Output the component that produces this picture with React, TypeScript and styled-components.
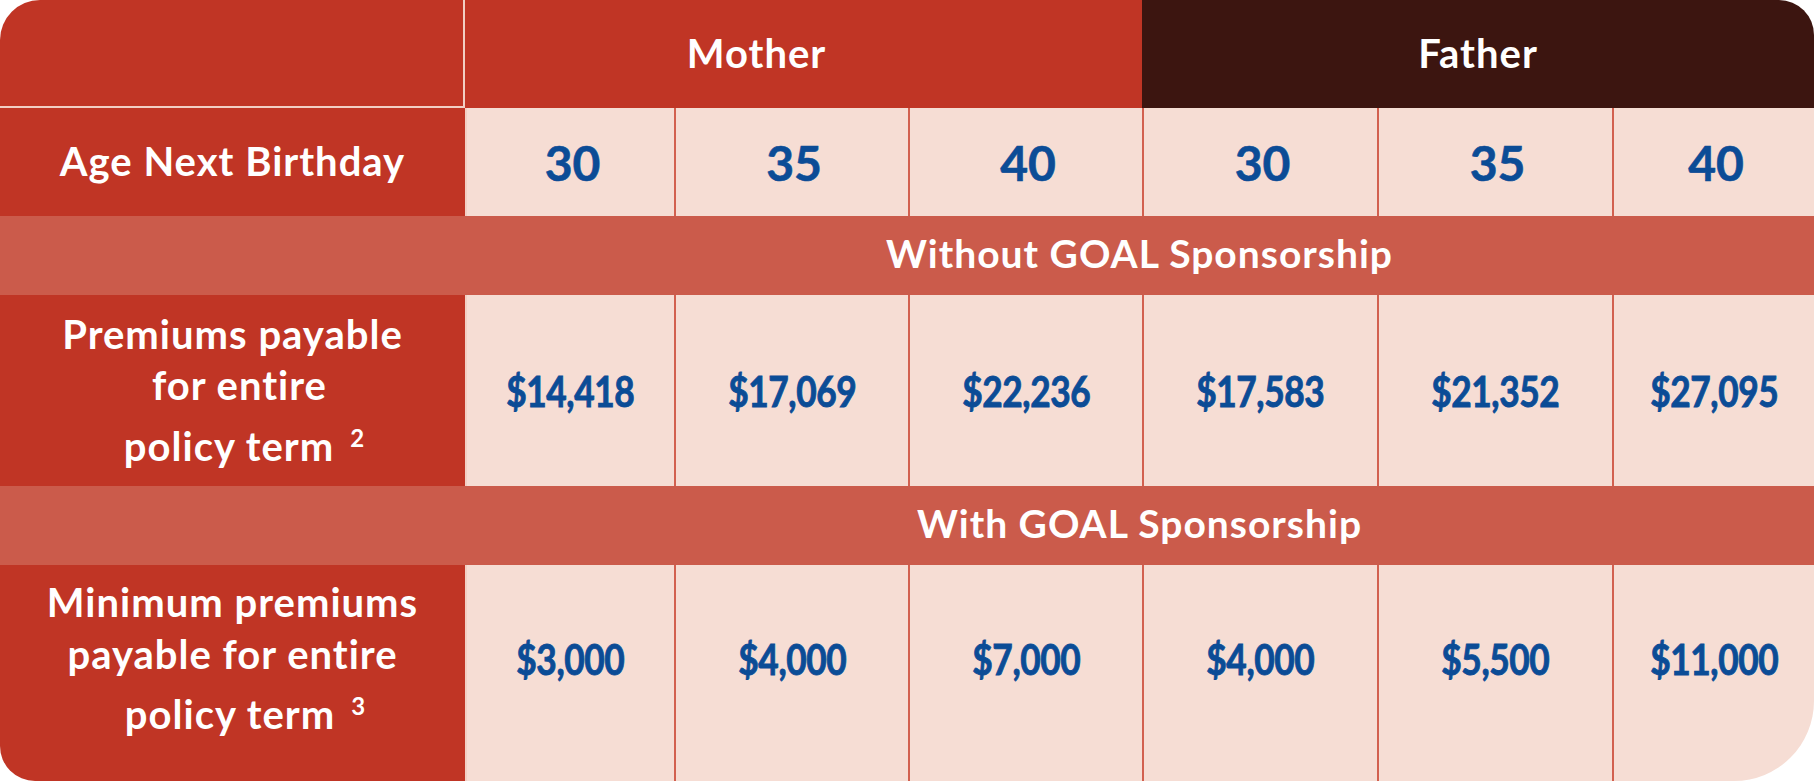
import React, { FC } from 'react';
import styled, { createGlobalStyle } from 'styled-components';

const GlobalStyle = createGlobalStyle`
  html, body {
    margin: 0;
    padding: 0;
    background: #ffffff;
  }

  * {
    box-sizing: border-box;
  }
`;

const RED = '#c03525';
const BAND = '#cb5b4b';
const DARK = '#3c1510';
const CELL = '#f6ddd4';
const BLUE = '#0b4c96';
const LINE = '#d2604f';
const PALE = '#f2cfc4';

const StyledTable = styled.div`
  width: 1814px;
  height: 781px;
  display: grid;
  grid-template-columns: 465px 209px 234px 234px 235px 235px 1fr;
  grid-template-rows: 108px 108px 79px 191px 79px 216px;
  border-radius: 40px 35px 80px 35px;
  overflow: hidden;
  font-family: Lato, 'Noto Sans', sans-serif;
  font-weight: 700;
`;

const StyledCorner = styled.div`
  background: ${RED};
  border-right: 2px solid ${PALE};
  border-bottom: 2px solid ${PALE};
`;

const StyledGroupHead = styled.div<{ $dark?: boolean; $shift?: number }>`
  grid-column: span 3;
  display: flex;
  align-items: center;
  justify-content: center;
  padding-right: ${(p) => p.$shift || 0}px;
  padding-bottom: 2px;
  background: ${(p) => (p.$dark ? DARK : RED)};
  color: #fff;
  font-size: 40px;
  letter-spacing: 1px;
`;

const StyledLabel = styled.div<{ $bottom?: number }>`
  display: flex;
  flex-direction: column;
  align-items: center;
  justify-content: center;
  padding-bottom: ${(p) => p.$bottom || 0}px;
  background: ${RED};
  color: #fff;
  font-size: 40px;
  letter-spacing: 1px;
  line-height: 51.5px;
  text-align: center;
`;

const StyledLine = styled.span<{ $indent?: number }>`
  display: block;
  white-space: pre;
  padding-left: ${(p) => p.$indent || 0}px;
`;

const StyledSup = styled.span`
  font-size: 24px;
  vertical-align: 14px;
  margin-left: 16px;
`;

const StyledCell = styled.div<{ $first?: boolean; $bottom?: number }>`
  display: flex;
  align-items: center;
  justify-content: center;
  padding-bottom: ${(p) => p.$bottom || 0}px;
  background: ${CELL};
  border-left: 2px solid ${(p) => (p.$first ? PALE : LINE)};
  color: ${BLUE};
`;

const StyledAge = styled.span`
  font-size: 48px;
  padding-left: 4px;
  -webkit-text-stroke: 0.6px ${BLUE};
`;

const StyledAmount = styled.span`
  display: inline-block;
  font-size: 42px;
  letter-spacing: -0.5px;
  transform: scaleX(0.84);
  -webkit-text-stroke: 0.9px ${BLUE};
`;

const StyledBand = styled.div`
  grid-column: 1 / -1;
  display: flex;
  align-items: center;
  justify-content: center;
  padding-left: 465px;
  padding-bottom: 6px;
  background: ${BAND};
  color: #fff;
  font-size: 39px;
  letter-spacing: 1px;
`;

const ages = ['30', '35', '40', '30', '35', '40'];
const withoutSponsor = ['$14,418', '$17,069', '$22,236', '$17,583', '$21,352', '$27,095'];
const withSponsor = ['$3,000', '$4,000', '$7,000', '$4,000', '$5,500', '$11,000'];

type AmountRowProps = {
  values: string[];
  bottom?: number;
};

const AmountRow: FC<AmountRowProps> = ({ values, bottom }) => (
  <>
    {values.map((v, i) => (
      <StyledCell key={i} $first={i === 0} $bottom={bottom}>
        <StyledAmount>{v}</StyledAmount>
      </StyledCell>
    ))}
  </>
);

const App: FC = () => {
  return (
    <>
      <GlobalStyle />
      <StyledTable>
        <StyledCorner />
        <StyledGroupHead $shift={94}>Mother</StyledGroupHead>
        <StyledGroupHead $dark>Father</StyledGroupHead>

        <StyledLabel>Age Next Birthday</StyledLabel>
        {ages.map((a, i) => (
          <StyledCell key={i} $first={i === 0}>
            <StyledAge>{a}</StyledAge>
          </StyledCell>
        ))}

        <StyledBand>Without GOAL Sponsorship</StyledBand>

        <StyledLabel>
          <StyledLine>Premiums payable</StyledLine>
          <StyledLine $indent={14}>for entire</StyledLine>
          <StyledLine $indent={24}>
            policy term<StyledSup>2</StyledSup>
          </StyledLine>
        </StyledLabel>
        <AmountRow values={withoutSponsor} />

        <StyledBand>With GOAL Sponsorship</StyledBand>

        <StyledLabel $bottom={28}>
          <StyledLine>Minimum premiums</StyledLine>
          <StyledLine>payable for entire</StyledLine>
          <StyledLine $indent={26}>
            policy term<StyledSup>3</StyledSup>
          </StyledLine>
        </StyledLabel>
        <AmountRow values={withSponsor} bottom={28} />
      </StyledTable>
    </>
  );
};

export default App;
